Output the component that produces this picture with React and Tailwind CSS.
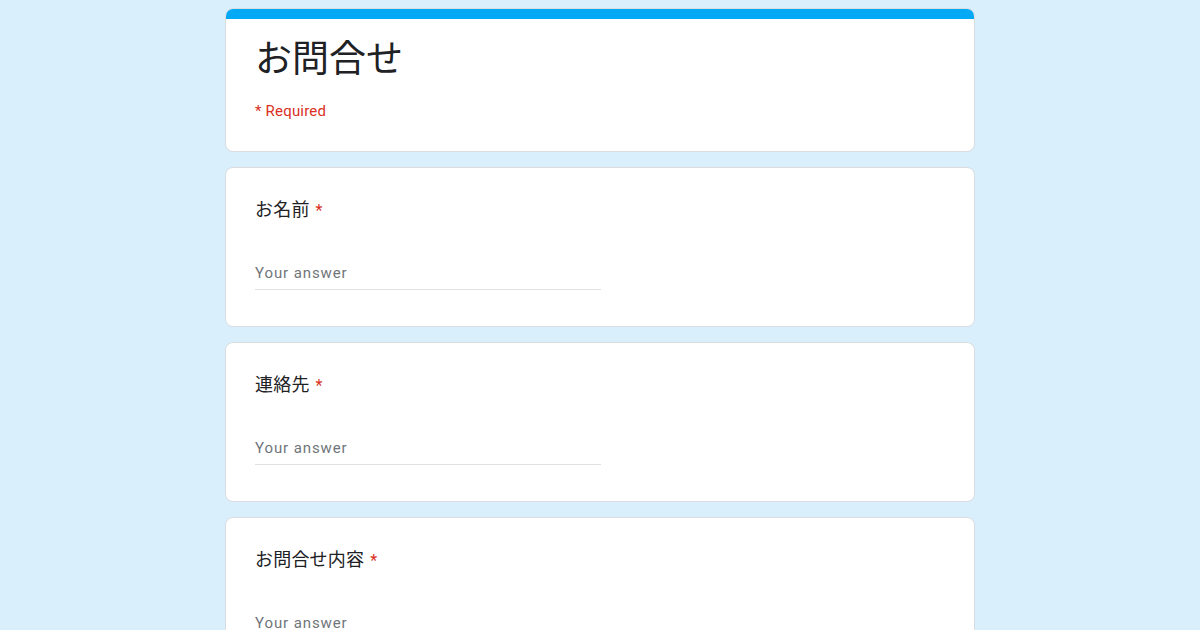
export default function App() {
  const font = { fontFamily: 'Roboto, "Noto Sans CJK JP", sans-serif' };
  const Question = ({ label }) => (
    <div className="bg-white rounded-lg border border-[#dadce0] px-[29px] pt-[30px] pb-[36px]">
      <div className="text-[18px] leading-[24px] text-[#202124] tracking-[0.2px]">
        {label}
        <span className="text-[#d93025] ml-[6px] text-[16px]">*</span>
      </div>
      <div className="mt-[39px] w-[346px] border-b border-[#e0e0e0] pb-[5px] text-[15px] leading-[22px] text-[#70757a] tracking-[0.9px]">
        Your answer
      </div>
    </div>
  );
  return (
    <div className="min-h-[630px] h-[630px] overflow-hidden bg-[#d9effc]" style={font}>
      <div className="w-[750px] mx-auto pt-[8px] flex flex-col gap-[15px]">
        <div className="bg-white rounded-lg border border-[#dadce0] overflow-hidden">
          <div className="h-[10px] bg-[#03a9f4]" />
          <div className="px-[29px] pt-[15px] pb-[30px]">
            <div className="text-[37px] leading-[52px] text-[#202124]">お問合せ</div>
            <div className="mt-[15px] text-[15px] leading-[20px] text-[#d93025] tracking-[0.2px]">* Required</div>
          </div>
        </div>
        <Question label="お名前" />
        <Question label="連絡先" />
        <Question label="お問合せ内容" />
      </div>
    </div>
  );
}
